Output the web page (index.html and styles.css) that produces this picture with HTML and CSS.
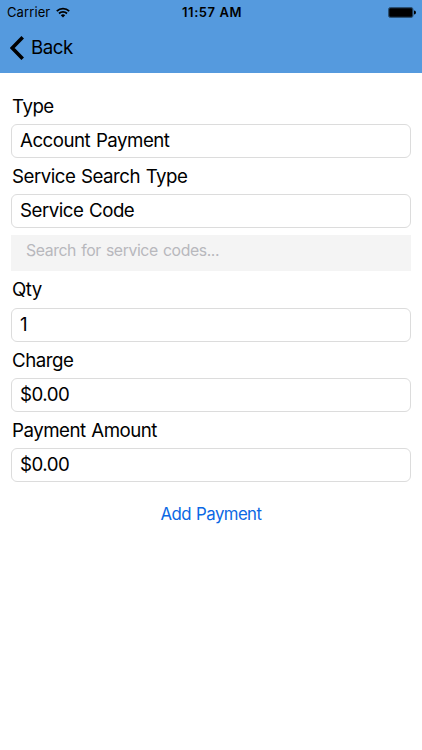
FILE: index.html
```html
<!DOCTYPE html>
<html lang="en">
<head>
<meta charset="utf-8">
<title>Add Payment</title>
<link rel="stylesheet" href="styles.css">
</head>
<body>
<header class="header">
  <div class="status">
    <div class="carrier"><span class="carrier-name">Carrier</span>
      <svg class="wifi" width="14" height="11" viewBox="0 0 14 11"><g fill="none" stroke="#000" stroke-width="1.8"><path d="M.8 4.1a8.8 8.8 0 0 1 12.4 0"/><path d="M3 6.5a5.7 5.7 0 0 1 8 0"/></g><path d="M4.8 8.3a3.2 3.2 0 0 1 4.4 0L7 10.6z"/></svg>
    </div>
    <time class="time">11:57 AM</time>
    <svg class="battery" width="28" height="11" viewBox="0 0 28 11"><rect x=".5" y=".5" width="24.5" height="10" rx="2" fill="#14293d" stroke="#2b5072"/><rect x="1.5" y="1.5" width="22.5" height="8" rx="1"/><path d="M26 3.5a2 2 0 0 1 0 4z"/></svg>
  </div>
  <nav class="nav">
    <svg class="chevron" width="14" height="24" viewBox="0 0 14 24"><path d="M12.7 1.3 2.2 12l10.5 10.7" fill="none" stroke="#000" stroke-width="3.6"/></svg>
    <span class="back">Back</span>
  </nav>
</header>
<main class="form">
  <div class="label">Type</div>
  <div class="field">Account Payment</div>
  <div class="label">Service Search Type</div>
  <div class="field">Service Code</div>
  <div class="search">Search for service codes...</div>
  <div class="label">Qty</div>
  <div class="field">1</div>
  <div class="label">Charge</div>
  <div class="field">$0.00</div>
  <div class="label">Payment Amount</div>
  <div class="field">$0.00</div>
  <div class="action">Add Payment</div>
</main>
</body>
</html>
```
FILE: styles.css
```css
* { box-sizing: border-box; }
body { margin: 0; background: #fff; color: #000; font-family: Inter, "Liberation Sans", sans-serif; }
svg { display: block; flex: none; }
.header { height: 72.5px; background: #559ade; }
.status { height: 24px; display: grid; grid-template-columns: 1fr auto 1fr; align-items: center; padding: 0 6px 0 7px; font-size: 13px; }
.carrier { display: flex; align-items: center; gap: 6px; letter-spacing: 0.1px; }
.time { font-weight: 600; letter-spacing: 0.55px; padding-left: 1px; }
.battery { justify-self: end; }
.nav { height: 47px; display: flex; align-items: center; padding-left: 10px; gap: 7px; font-size: 18.7px; letter-spacing: -0.5px; }
.form { padding: 15.3px 11px 0; }
.label { height: 36.3px; line-height: 37px; padding-left: 1px; font-size: 18.7px; letter-spacing: -0.5px; word-spacing: 0.9px; white-space: nowrap; }
.field { height: 34px; border: 1px solid #dcdcdc; border-radius: 6px; line-height: 31px; padding-left: 8px; font-size: 18.7px; letter-spacing: -0.5px; word-spacing: 1px; white-space: nowrap; }
.search { height: 35.5px; margin: 6.9px 0 0.5px; background: #f4f4f4; color: #b8b8bd; line-height: 31px; padding-left: 15px; font-size: 15.8px; letter-spacing: -0.4px; word-spacing: 1.1px; }
.action { margin-top: 21.5px; text-align: center; color: #0b68e4; font-size: 16.8px; letter-spacing: -0.56px; word-spacing: 0.9px; line-height: 20px; }
```
